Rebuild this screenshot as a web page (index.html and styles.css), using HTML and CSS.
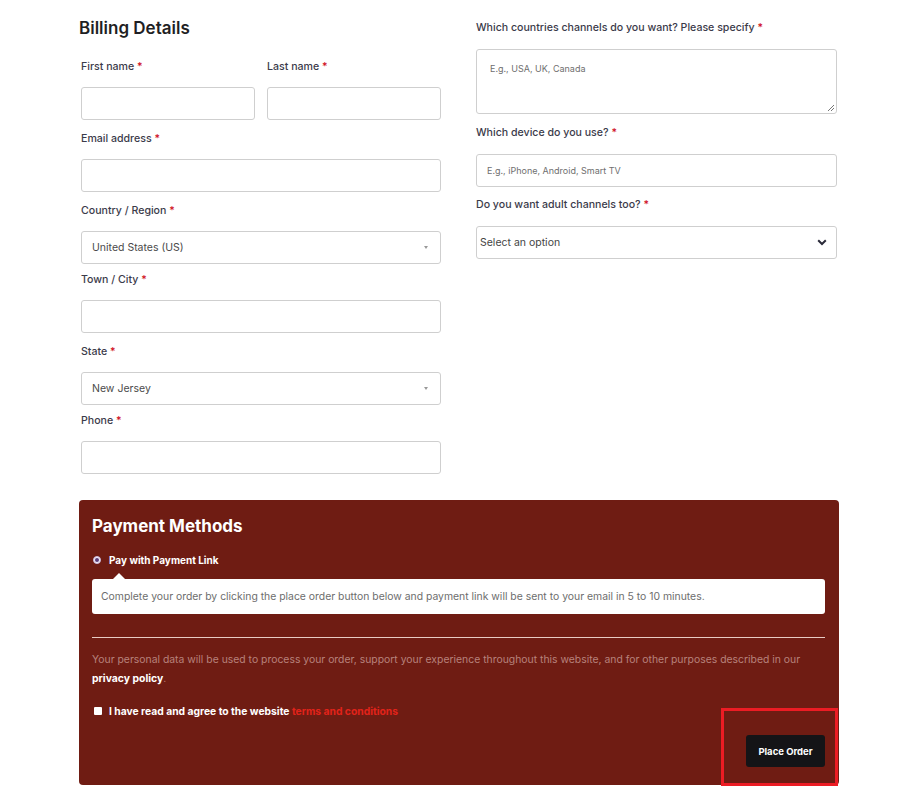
FILE: index.html
```html
<!DOCTYPE html>
<html lang="en">
<head>
<meta charset="utf-8">
<title>Checkout</title>
<link rel="stylesheet" href="styles.css">
</head>
<body>
<div class="page">
  <div class="columns">
    <div class="col col-left">
      <h2 class="title">Billing Details</h2>
      <div class="row-2">
        <div class="field">
          <label class="lbl">First name <span class="req">*</span></label>
          <div class="input"></div>
        </div>
        <div class="field">
          <label class="lbl">Last name <span class="req">*</span></label>
          <div class="input"></div>
        </div>
      </div>
      <div class="field">
        <label class="lbl">Email address <span class="req">*</span></label>
        <div class="input"></div>
      </div>
      <div class="field field-sel">
        <label class="lbl">Country / Region <span class="req">*</span></label>
        <div class="input select"><span class="val">United States (US)</span><span class="caret"></span></div>
      </div>
      <div class="field">
        <label class="lbl">Town / City <span class="req">*</span></label>
        <div class="input"></div>
      </div>
      <div class="field field-sel">
        <label class="lbl">State <span class="req">*</span></label>
        <div class="input select"><span class="val">New Jersey</span><span class="caret"></span></div>
      </div>
      <div class="field field-last">
        <label class="lbl">Phone <span class="req">*</span></label>
        <div class="input"></div>
      </div>
    </div>
    <div class="col col-right">
      <div class="field">
        <label class="lbl">Which countries channels do you want? Please specify <span class="req">*</span></label>
        <div class="input textarea"><span class="ph">E.g., USA, UK, Canada</span>
          <svg class="grip" width="9" height="9" viewBox="0 0 9 9"><path d="M8 2 L2 8 M8 5 L5 8" stroke="#777" stroke-width="1" fill="none"/></svg>
        </div>
      </div>
      <div class="field">
        <label class="lbl">Which device do you use? <span class="req">*</span></label>
        <div class="input text"><span class="ph">E.g., iPhone, Android, Smart TV</span></div>
      </div>
      <div class="field">
        <label class="lbl">Do you want adult channels too? <span class="req">*</span></label>
        <div class="input native"><span class="val">Select an option</span>
          <svg class="chev" width="10" height="7" viewBox="0 0 10 7"><path d="M1.2 1.2 L5 5 L8.8 1.2" stroke="#2b2b3a" stroke-width="2" fill="none"/></svg>
        </div>
      </div>
    </div>
  </div>

  <div class="payment">
    <h2 class="pay-title">Payment Methods</h2>
    <div class="method">
      <span class="radio"><span class="dot"></span></span>
      <span class="method-name">Pay with Payment Link</span>
    </div>
    <div class="method-box">Complete your order by clicking the place order button below and payment link will be sent to your email in 5 to 10 minutes.</div>
    <hr class="divider">
    <p class="privacy">Your personal data will be used to process your order, support your experience throughout this website, and for other purposes described in our <b>privacy policy</b>.</p>
    <div class="terms">
      <span class="check"></span>
      <span class="terms-text">I have read and agree to the website <span class="terms-link">terms and conditions</span></span>
    </div>
    <div class="actions">
      <button class="btn">Place Order</button>
    </div>
    <div class="highlight"></div>
  </div>
</div>
</body>
</html>
```

FILE: styles.css
```css
* { box-sizing: border-box; }
html, body { margin: 0; padding: 0; background: #fff; }
body {
  font-family: Inter, "Noto Sans", "Liberation Sans", sans-serif;
  color: #3b3b4a;
  width: 920px;
  height: 787px;
  overflow: hidden;
}
.page {
  width: 760px;
  margin-left: 79px;
  padding-top: 17px;
}
.columns {
  display: grid;
  grid-template-columns: 362px 361px;
  column-gap: 35px;
  align-items: start;
}
.col-left { padding-left: 2px; }
.title {
  margin: 0 0 20px -2px;
  font-size: 17px;
  line-height: 22px;
  font-weight: 600;
  color: #1f1f24;
}
.row-2 {
  display: grid;
  grid-template-columns: 174px 174px;
  column-gap: 12px;
}
.field { margin-bottom: 11px; }
.field-sel { margin-bottom: 8px; }
.field-last { margin-bottom: 0; }
.lbl {
  display: block;
  font-size: 10.6px;
  line-height: 16px;
  font-weight: 500;
  color: #3b3b4a;
  margin-bottom: 12px;
}
.req { color: #d0101e; }
.input {
  height: 33px;
  border: 1px solid #cfcfcf;
  border-radius: 3px;
  background: #fff;
  display: flex;
  align-items: center;
  position: relative;
}
.select { padding: 0 10px; justify-content: space-between; }
.val { font-size: 10.5px; color: #4a4a4a; }
.caret {
  width: 0; height: 0;
  border-left: 2px solid transparent;
  border-right: 2px solid transparent;
  border-top: 3px solid #999;
  margin-right: 2px;
}
.col-right { padding-top: 3px; }
.col-right .lbl { margin-bottom: 13px; }
.col-right .field { margin-bottom: 11px; }
.col-right .field:nth-child(2) { margin-bottom: 10px; }
.textarea {
  height: 65px;
  align-items: flex-start;
  padding: 13px 13px;
}
.grip { position: absolute; right: 1px; bottom: 1px; }
.text { padding: 0 10px; }
.ph { font-size: 9px; color: #6f6f6f; }
.native { padding: 0 9px 0 3px; justify-content: space-between; }
.native .val { font-size: 10.5px; color: #444; }

.payment {
  position: relative;
  margin-top: 26px;
  background: #6f1c13;
  border-radius: 4px;
  padding: 15px 14px 18px 13px;
  color: #fff;
}
.pay-title {
  margin: 0 0 15px;
  font-size: 17px;
  line-height: 22px;
  font-weight: 700;
  color: #fff;
}
.method {
  display: flex;
  align-items: center;
  height: 16px;
  padding-left: 1px;
}
.radio {
  width: 8px; height: 8px;
  border-radius: 50%;
  background: #f3eef8;
  border: 1px solid #c9b6d9;
  display: flex; align-items: center; justify-content: center;
  margin-right: 8px;
}
.dot { width: 4px; height: 4px; border-radius: 50%; background: #5a3c7a; }
.method-name { font-size: 10px; font-weight: 700; color: #fff; }
.method-box {
  position: relative;
  margin-top: 11px;
  background: #fff;
  border-radius: 3px;
  height: 35px;
  padding: 0 9px;
  display: flex;
  align-items: center;
  font-size: 10.4px;
  color: #6d6d6d;
}
.method-box::before {
  content: "";
  position: absolute;
  top: -6px;
  left: 20px;
  border-left: 7px solid transparent;
  border-right: 7px solid transparent;
  border-bottom: 7px solid #fff;
}
.divider {
  margin: 23px 0 0;
  border: 0;
  height: 1px;
  background: #e8cbc4;
}
.privacy {
  margin: 12px 0 0;
  font-size: 10.4px;
  line-height: 19px;
  color: #b7827c;
}
.privacy b { color: #fff; font-weight: 700; }
.terms {
  display: flex;
  align-items: center;
  margin-top: 15px;
  padding-left: 2px;
  height: 16px;
}
.check {
  width: 8px; height: 8px;
  background: #fff;
  border-radius: 1px;
  margin-right: 7px;
}
.terms-text { font-size: 10.3px; font-weight: 700; color: #fff; }
.terms-link { color: #e2231a; }
.actions {
  display: flex;
  justify-content: flex-end;
  margin-top: 16px;
}
.btn {
  width: 79px;
  height: 32px;
  border: 0;
  border-radius: 3px;
  background: #141417;
  color: #fff;
  font-family: inherit;
  font-size: 9.5px;
  font-weight: 700;
  padding: 0;
}
.highlight {
  position: absolute;
  left: 642px;
  top: 208px;
  width: 117px;
  height: 78px;
  border: 3px solid #ec1c24;
  pointer-events: none;
}
```
